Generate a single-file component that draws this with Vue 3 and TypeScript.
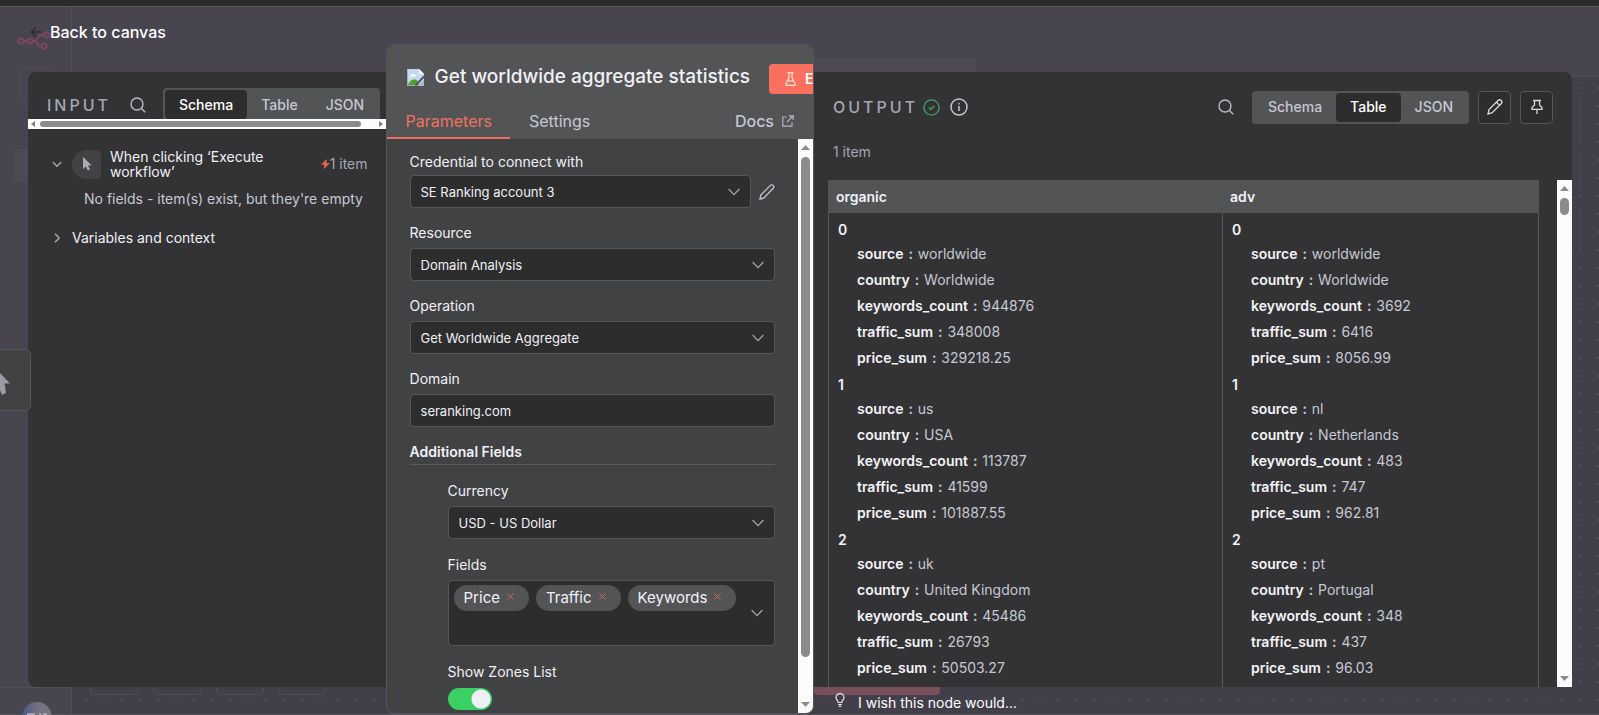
<script setup lang="ts">
import { ref } from 'vue'

interface Row {
  source: string
  country: string
  keywords_count: string
  traffic_sum: string
  price_sum: string
}

const row = (source: string, country: string, keywords: string, traffic: string, price: string): Row => ({
  source,
  country,
  keywords_count: keywords,
  traffic_sum: traffic,
  price_sum: price,
})

const columns: { name: string; rows: Row[] }[] = [
  {
    name: 'organic',
    rows: [
      row('worldwide', 'Worldwide', '944876', '348008', '329218.25'),
      row('us', 'USA', '113787', '41599', '101887.55'),
      row('uk', 'United Kingdom', '45486', '26793', '50503.27'),
    ],
  },
  {
    name: 'adv',
    rows: [
      row('worldwide', 'Worldwide', '3692', '6416', '8056.99'),
      row('nl', 'Netherlands', '483', '747', '962.81'),
      row('pt', 'Portugal', '348', '437', '96.03'),
    ],
  },
]

const views = ['Schema', 'Table', 'JSON']
const inputView = ref('Schema')
const outputView = ref('Table')
const domain = ref('seranking.com')
const tags = ref(['Price', 'Traffic', 'Keywords'])
const showZones = ref(true)

function removeTag(tag: string) {
  tags.value = tags.value.filter((t) => t !== tag)
}
</script>

<template>
  <div class="app">
    <div class="canvas" aria-hidden="true">
      <div class="topbar"></div>
      <div class="header-band"></div>
      <div class="dots"></div>
      <div class="sidebar">
        <div class="sidebar-foot"></div>
      </div>
      <svg class="brand" width="36" height="20" viewBox="0 0 36 20" fill="none" stroke="#7d4560" stroke-width="2">
        <circle cx="4" cy="10" r="2.6" /><circle cx="13" cy="10" r="2.6" />
        <circle cx="30" cy="4" r="2.6" /><circle cx="27" cy="15" r="2.6" />
        <path d="M6.6 10h4M15.6 10h3c2 0 1-6 5-6h4M18.6 10c2 0 1 5 5 5" />
      </svg>
      <svg class="avatar" width="30" height="30" viewBox="0 0 30 30">
        <defs>
          <linearGradient id="av"><stop offset="0" stop-color="#46598a" /><stop offset=".55" stop-color="#77727f" /></linearGradient>
        </defs>
        <circle cx="15" cy="15" r="15" fill="url(#av)" />
        <path d="M5 12h8M17 12h2M21 12h4" stroke="#a5a4b0" stroke-width="2" />
      </svg>
      <svg class="bottom-boxes" width="250" height="30" viewBox="0 0 250 30" fill="none" stroke="#514e59">
        <rect x=".5" y="-9.5" width="48" height="32" rx="4" /><rect x="63.5" y="-9.5" width="48" height="32" rx="4" />
        <rect x="126.5" y="-9.5" width="47" height="32" rx="4" /><rect x="188.5" y="-9.5" width="46" height="32" rx="4" />
      </svg>
      <svg class="right-boxes" width="48" height="160" viewBox="0 0 48 160" fill="none" stroke="#4b4852">
        <rect x="1" y=".5" width="46" height="45" rx="4" /><rect x="1" y="56.5" width="46" height="45" rx="4" />
        <rect x="1" y="111.5" width="46" height="45" rx="4" />
      </svg>
      <div class="ghost-tab"></div>
      <div class="ghost-button"></div>
      <div class="side-item a"></div>
      <div class="side-item b"></div>
    </div>

    <div class="ndv">
      <a class="back" href="#">
        <svg width="12" height="12" viewBox="0 0 12 12" fill="none" stroke="#2b2b30" stroke-width="1.3"><path d="M11 6H1.5M6 1.2 1.2 6 6 10.8" /></svg>
        <span>Back to canvas</span>
      </a>

      <div class="panels">
        <section class="panel input">
          <div class="input-head">
            <h2>INPUT</h2>
            <button class="icon-btn" aria-label="Search input">
              <svg width="16" height="16" viewBox="0 0 16 16" fill="none" stroke="#b8bac6" stroke-width="1.4"><circle cx="7" cy="7" r="6" /><path d="m11.4 11.4 3.8 3.8" /></svg>
            </button>
            <div class="radio">
              <button v-for="v in views" :key="v" :class="{ active: v === inputView }" @click="inputView = v">{{ v }}</button>
            </div>
          </div>
          <div class="hbar" aria-hidden="true">
            <svg width="4" height="6" viewBox="0 0 4 6"><path d="M4 0v6L0 3z" fill="#7e7e7e" /></svg>
            <div class="hthumb"></div>
            <svg width="4" height="6" viewBox="0 0 4 6"><path d="M0 0v6l4-3z" fill="#7e7e7e" /></svg>
          </div>
          <div class="schema">
            <div class="node">
              <svg class="chev" width="10" height="10" viewBox="0 0 10 10" fill="none" stroke="#a6a8b2" stroke-width="1.4"><path d="m.8 3 4.2 4.2L9.2 3" /></svg>
              <span class="node-icon">
                <svg width="10" height="14" viewBox="0 0 10 14"><path d="M1 0v12l2.8-2.6 2 4.2 2.2-1-2-4.2h3.8z" fill="#aaacb4" /></svg>
              </span>
              <span class="node-name">When clicking ‘Execute workflow’</span>
              <span class="count">
                <svg width="9" height="10" viewBox="0 0 9 10"><path d="M5.5 0 0 5.8h3L3 10l6-6H5.6z" fill="#e8604f" /></svg>1 item
              </span>
            </div>
            <p class="empty">No fields - item(s) exist, but they're empty</p>
            <div class="vars">
              <svg class="chev" width="10" height="10" viewBox="0 0 10 10" fill="none" stroke="#a6a8b2" stroke-width="1.4"><path d="m3 .8 4.2 4.2L3 9.2" /></svg>
              <span>Variables and context</span>
            </div>
          </div>
        </section>

        <section class="main">
          <header class="main-head">
            <div class="title-row">
              <svg width="17" height="17" viewBox="0 0 17 17">
                <path d="M0 0h12l5 5v12H0z" fill="#c6d7f4" /><path d="M12 0v5h5z" fill="#fff" />
                <path d="M3 7.5a2 2 0 0 1 2-2 2.5 2.5 0 0 1 4 2z" fill="#fff" />
                <path d="M1 16c1-4 4-6 7-5.5 2 0 3 1.5 4 5.5z" fill="#4ba72f" />
                <path d="M.5.5V16.5H16.5" stroke="#a9abae" fill="none" />
                <path d="M17 7.5 8.5 16.5" stroke="#535456" stroke-width="2" /><path d="M11 17h6v-6z" fill="#a9b4c4" />
              </svg>
              <h1>Get worldwide aggregate statistics</h1>
              <button class="execute">
                <svg width="11" height="14" viewBox="0 0 11 14" fill="none" stroke="#ffe9e4" stroke-width="1.1"><path d="M2.5.6h6M4 .6v5L.8 12a1 1 0 0 0 .9 1.4h7.6a1 1 0 0 0 .9-1.4L7 5.6v-5M2.4 9h6.2" /></svg>
                Execute step
              </button>
            </div>
            <nav class="tabs">
              <button class="tab active">Parameters</button>
              <button class="tab">Settings</button>
              <a class="docs" href="#">Docs
                <svg width="12" height="12" viewBox="0 0 12 12" fill="none" stroke="#b4b6c0" stroke-width="1.2"><path d="M4.5 2H.8v9.2H10V7.5M7 .8h4.2V5M11 1 5 7" /></svg>
              </a>
            </nav>
          </header>
          <div class="main-body">
            <form class="form" @submit.prevent>
              <div class="field credential">
                <label for="cred">Credential to connect with</label>
                <div class="line">
                  <div class="control">
                    <select id="cred"><option>SE Ranking account 3</option></select>
                    <svg class="caret" width="12" height="8" viewBox="0 0 12 8"><path d="m.6 1 5.4 5.6L11.4 1" /></svg>
                  </div>
                  <button type="button" class="icon-btn" aria-label="Edit credential">
                    <svg width="16" height="16" viewBox="0 0 16 16" fill="none" stroke="#c4c6d0" stroke-width="1.3"><path d="M1 15l.8-4L11.4 1.4a1.8 1.8 0 0 1 2.8 2.8L5 14z" /></svg>
                  </button>
                </div>
              </div>
              <div class="field">
                <label for="res">Resource</label>
                <div class="control">
                  <select id="res"><option>Domain Analysis</option></select>
                  <svg class="caret" width="12" height="8" viewBox="0 0 12 8"><path d="m.6 1 5.4 5.6L11.4 1" /></svg>
                </div>
              </div>
              <div class="field">
                <label for="op">Operation</label>
                <div class="control">
                  <select id="op"><option>Get Worldwide Aggregate</option></select>
                  <svg class="caret" width="12" height="8" viewBox="0 0 12 8"><path d="m.6 1 5.4 5.6L11.4 1" /></svg>
                </div>
              </div>
              <div class="field">
                <label for="dom">Domain</label>
                <div class="control"><input id="dom" v-model="domain" type="text" /></div>
              </div>
              <h3>Additional Fields</h3>
              <div class="nested">
                <div class="field">
                  <label for="cur">Currency</label>
                  <div class="control">
                    <select id="cur"><option>USD - US Dollar</option></select>
                    <svg class="caret" width="12" height="8" viewBox="0 0 12 8"><path d="m.6 1 5.4 5.6L11.4 1" /></svg>
                  </div>
                </div>
                <div class="field">
                  <span id="fields-label" class="label">Fields</span>
                  <div class="control multi" role="group" aria-labelledby="fields-label">
                    <span v-for="tag in tags" :key="tag" class="tag">{{ tag }}
                      <button type="button" :aria-label="'Remove ' + tag" @click="removeTag(tag)">
                        <svg width="7" height="7" viewBox="0 0 7 7" stroke="#d0685c" stroke-width="1"><path d="m.4.4 6.2 6.2M6.6.4.4 6.6" /></svg>
                      </button>
                    </span>
                    <svg class="caret" width="12" height="8" viewBox="0 0 12 8"><path d="m.6 1 5.4 5.6L11.4 1" /></svg>
                  </div>
                </div>
                <div class="field">
                  <label for="zones">Show Zones List</label>
                  <input id="zones" v-model="showZones" class="switch" type="checkbox" role="switch" />
                </div>
              </div>
            </form>
            <div class="vbar" aria-hidden="true">
              <svg width="9" height="5" viewBox="0 0 9 5"><path d="M0 5h9L4.5 0z" fill="#8b8b8b" /></svg>
              <div class="vtrack"><div class="vthumb form-thumb"></div></div>
              <svg width="9" height="5" viewBox="0 0 9 5"><path d="M0 0h9L4.5 5z" fill="#8b8b8b" /></svg>
            </div>
          </div>
        </section>

        <section class="panel output">
          <div class="output-head">
            <h2>OUTPUT</h2>
            <svg width="17" height="17" viewBox="0 0 17 17" fill="none" stroke="#3f9f63" stroke-width="1.4"><circle cx="8.5" cy="8.5" r="7.6" /><path d="m5.8 8.6 2 2 3.5-3.7" /></svg>
            <svg width="18" height="18" viewBox="0 0 18 18" fill="none" stroke="#c4c6cf" stroke-width="1.5"><circle cx="9" cy="9" r="8" /><path d="M9 8v5M9 5v1.5" /></svg>
            <span class="spacer"></span>
            <button class="icon-btn" aria-label="Search output">
              <svg width="16" height="16" viewBox="0 0 16 16" fill="none" stroke="#b8bac6" stroke-width="1.4"><circle cx="7" cy="7" r="6" /><path d="m11.4 11.4 3.8 3.8" /></svg>
            </button>
            <div class="radio">
              <button v-for="v in views" :key="v" :class="{ active: v === outputView }" @click="outputView = v">{{ v }}</button>
            </div>
            <button class="square" aria-label="Edit output">
              <svg width="16" height="16" viewBox="0 0 16 16" fill="none" stroke="#d8dae2" stroke-width="1.3"><path d="M1 15l1-4.5 9-9a1.9 1.9 0 0 1 3.2 3.2l-9 9zM9.5 3.2l3.2 3.2" /></svg>
            </button>
            <button class="square" aria-label="Pin data">
              <svg width="12" height="16" viewBox="0 0 12 16" fill="none" stroke="#d8dae2" stroke-width="1.3"><path d="M2 1.5h8M3.5 1.5v4.5L1 8.5v1.8h10V8.5L8.5 6V1.5M6 10.3V15" /></svg>
            </button>
          </div>
          <p class="items">1 item</p>
          <div class="data">
            <div class="table-wrap">
              <table>
                <colgroup><col class="c1" /><col /></colgroup>
                <thead>
                  <tr><th v-for="c in columns" :key="c.name" scope="col">{{ c.name }}</th></tr>
                </thead>
                <tbody>
                  <tr>
                    <td v-for="c in columns" :key="c.name">
                      <div v-for="(r, i) in c.rows" :key="i" class="group">
                        <div class="index">{{ i }}</div>
                        <div v-for="(val, key) in r" :key="key" class="pair"><b>{{ key }}</b> <i>:</i> {{ val }}</div>
                      </div>
                    </td>
                  </tr>
                </tbody>
              </table>
            </div>
            <div class="vbar" aria-hidden="true">
              <svg width="9" height="5" viewBox="0 0 9 5"><path d="M0 5h9L4.5 0z" fill="#8b8b8b" /></svg>
              <div class="vtrack"><div class="vthumb data-thumb"></div></div>
              <svg width="9" height="5" viewBox="0 0 9 5"><path d="M0 0h9L4.5 5z" fill="#8b8b8b" /></svg>
            </div>
          </div>
        </section>
      </div>

      <footer class="foot">
        <a class="wish" href="#">
          <svg width="10" height="14" viewBox="0 0 10 14" fill="none" stroke="#e6e6ec" stroke-width="1.2"><path d="M3.3 9.5C3.3 7.5 1 7 1 4.6a4 4 0 0 1 8 0C9 7 6.7 7.5 6.7 9.5zM3 11.5h4M3.8 13.4h2.4" /></svg>
          <span>I wish this node would...</span>
        </a>
      </footer>
    </div>

    <button class="float-node" aria-label="Previous node">
      <svg width="11" height="25" viewBox="0 0 11 25"><path d="M0 1l10 10.5H4.5L6 21l-4 2-2-5z" fill="#9a9ba3" /></svg>
    </button>
  </div>
</template>

<style>
html,
body {
  background: #423f4a;
}
</style>

<style scoped>
* {
  box-sizing: border-box;
}
.app {
  position: relative;
  height: 100vh;
  overflow: hidden;
  background: #423f4a;
  color: #f0f0f6;
  font: 400 14px/20px Inter, 'Liberation Sans', sans-serif;
}
h1, h2, h3, p {
  margin: 0;
}
button, input, select {
  font: inherit;
  color: inherit;
  margin: 0;
}
button {
  padding: 0;
  border: 0;
  background: none;
}
a {
  color: inherit;
  text-decoration: none;
}
svg {
  display: block;
  flex: none;
}

/* dimmed workflow canvas */
.canvas,
.canvas > * {
  position: absolute;
}
.canvas {
  inset: 0;
  border-bottom: 1px solid #55545a;
}
.topbar {
  inset: 0 0 auto;
  height: 7px;
  background: #2c2c2d;
  border-bottom: 1px solid #58585a;
}
.header-band {
  inset: 7px 0 auto;
  height: 70px;
  background: #484550;
  border-bottom: 1px solid #524f59;
}
.dots {
  inset: 77px 0 0 72px;
  background: radial-gradient(circle at 1px 1px, #524f5b 1px, transparent 1px) 13px 10px / 18px 18px;
}
.sidebar {
  inset: 7px auto 0 0;
  width: 72px;
  background: #484550;
  border-right: 1px solid #514e58;
  display: flex;
  align-items: flex-end;
}
.sidebar-foot {
  width: 100%;
  height: 27px;
  border-top: 1px solid #514e58;
}
.brand {
  left: 17px;
  top: 31px;
}
.avatar {
  left: 22px;
  bottom: -18px;
}
.bottom-boxes {
  left: 90px;
  bottom: 12px;
}
.right-boxes {
  right: 18px;
  top: 96px;
}
.ghost-tab {
  left: 814px;
  top: 58px;
  width: 162px;
  height: 14px;
  background: #4d4a55;
}
.ghost-button {
  left: 814px;
  bottom: 19px;
  width: 126px;
  height: 40px;
  border-radius: 4px;
  background: #795059;
}
.side-item {
  border-radius: 4px;
  background: #4d4a54;
}
.side-item.a {
  left: 19px;
  top: 67px;
  width: 33px;
  height: 33px;
  border: 1px solid #4f4c56;
  background: none;
}
.side-item.b {
  left: 14px;
  top: 149px;
  width: 40px;
  height: 33px;
}

/* node details */
.ndv {
  position: relative;
  display: flex;
  flex-direction: column;
  height: 100%;
}
.back {
  display: flex;
  align-items: center;
  gap: 8px;
  height: 72px;
  padding: 0 0 8px 30px;
  font-size: 16px;
  font-weight: 500;
  color: #fff;
}
.panels {
  flex: 1;
  min-height: 0;
  display: flex;
  padding: 0 27px 0 28px;
}
.panel {
  min-width: 0;
  display: flex;
  flex-direction: column;
  overflow: hidden;
  background: #333335;
}
.input {
  flex: 358 1 0;
  border-radius: 8px 0 0 8px;
}
.main {
  flex: 427 1 0;
  min-width: 0;
  margin: -28px 0 -27px;
  display: flex;
  flex-direction: column;
  overflow: hidden;
  border: 1px solid #555658;
  border-radius: 8px;
  background: #414244;
}
.output {
  flex: 759 1 0;
  border-radius: 0 8px 0 0;
}
h2 {
  font-size: 16px;
  font-weight: 500;
  letter-spacing: 3px;
  color: #a4a7b3;
}
.radio {
  display: flex;
  flex: none;
  height: 33px;
  padding: 2px;
  border-radius: 4px;
  background: #535456;
}
.radio button {
  padding: 0 14px;
  border-radius: 4px;
  font-weight: 500;
  color: #c6c8d4;
}
.radio .active {
  background: #2d2d2e;
  color: #fff;
}
.input-head {
  display: flex;
  align-items: flex-start;
  height: 47px;
  padding: 16px 0 0 19px;
  overflow: hidden;
}
.input-head h2 {
  width: 83px;
  line-height: 34px;
}
.input-head .icon-btn {
  width: 33px;
  height: 34px;
}
.hbar {
  display: flex;
  align-items: center;
  justify-content: space-between;
  gap: 5px;
  height: 10px;
  padding: 0 3px;
  background: #fcfcfc;
}
.hthumb {
  flex: 1;
  height: 6px;
  margin-right: 13px;
  border-radius: 3px;
  background: #8b8b8b;
}
.schema {
  padding: 20px 18px 0 24px;
}
.node,
.vars {
  display: flex;
  align-items: center;
}
.node {
  height: 30px;
}
.chev {
  margin-right: 10px;
}
.node-icon {
  display: flex;
  align-items: center;
  justify-content: center;
  width: 29px;
  height: 29px;
  margin-right: 9px;
  border-radius: 15px 4px 4px 15px;
  background: #414244;
}
.node-name {
  flex: 1;
  max-width: 180px;
  line-height: 15px;
}
.count {
  display: flex;
  align-items: center;
  margin-left: auto;
  color: #a4a7b3;
}
.empty {
  margin: 10px -18px 19px 32px;
  color: #c6c8d4;
}

/* parameters */
.main-head {
  flex: none;
  background: #535456;
}
.title-row {
  display: flex;
  align-items: center;
  height: 64px;
  padding-left: 20px;
  overflow: hidden;
}
h1 {
  flex: none;
  margin-left: 11px;
  font-size: 19px;
  font-weight: 500;
  white-space: nowrap;
}
.execute {
  display: flex;
  flex: none;
  align-items: center;
  gap: 9px;
  height: 30px;
  margin: 4px 0 0 19px;
  padding: 0 16px;
  border-radius: 4px;
  background: #fa6f5e;
  color: #fff;
  font-weight: 600;
}
.tabs {
  display: flex;
  align-items: stretch;
  height: 30px;
  padding-right: 19px;
  font-size: 16px;
  color: #c6c8d4;
}
.tab {
  padding: 0 18px 6px 19px;
}
.tab.active {
  color: #f3705f;
  border-bottom: 2px solid #e8705f;
  padding-bottom: 4px;
}
.docs {
  display: flex;
  align-items: center;
  gap: 8px;
  margin-left: auto;
  padding-bottom: 6px;
  font-weight: 500;
}
.main-body {
  flex: 1;
  min-height: 0;
  display: flex;
}
.form {
  flex: 1;
  min-width: 0;
  padding: 13px 23px 0;
  overflow: hidden;
}
.field {
  margin-bottom: 15px;
}
label,
.label {
  display: block;
  height: 20px;
  margin-bottom: 5px;
}
.credential label {
  margin-bottom: 3px;
}
.line {
  display: flex;
  gap: 8px;
}
.control {
  position: relative;
  flex: 1;
}
select,
input[type='text'] {
  display: block;
  width: 100%;
  height: 33px;
  padding: 0 10px;
  appearance: none;
  border: 1px solid #555658;
  border-radius: 4px;
  background: #2d2d2e;
  font-size: 13px;
}
.caret {
  position: absolute;
  right: 11px;
  top: calc(50% - 4px);
  fill: none;
  stroke: #a6a8b2;
  stroke-width: 1.2;
}
h3 {
  height: 23px;
  margin: 0 0 16px;
  border-bottom: 1px solid #5a5b5e;
  font-size: 14px;
  font-weight: 600;
}
.nested {
  padding-left: 38px;
}
.nested .field {
  margin-bottom: 16px;
}
.multi {
  display: flex;
  align-items: flex-start;
  gap: 7px;
  height: 66px;
  padding: 4px 5px;
  border: 1px solid #555658;
  border-radius: 4px;
  background: #2d2d2e;
}
.tag {
  display: flex;
  gap: 7px;
  height: 26px;
  padding: 0 15px 0 10px;
  border-radius: 13px;
  background: #535456;
  font-size: 15px;
  line-height: 26px;
}
.tag button {
  align-self: flex-start;
  padding-top: 8px;
}
.switch {
  display: block;
  width: 44px;
  height: 22px;
  margin-top: 6px;
  appearance: none;
  border-radius: 11px;
  background: radial-gradient(circle at 33px 11px, #eff0f6 9px, transparent 10px) #3ad063;
}
.vbar {
  flex: none;
  display: flex;
  flex-direction: column;
  align-items: center;
  gap: 7px;
  width: 15px;
  padding: 6px 0;
  background: #fcfcfc;
}
.vtrack {
  flex: 1;
}
.vthumb {
  width: 9px;
  border-radius: 5px;
  background: #8b8b8b;
}
.form-thumb {
  height: 93%;
}
.data-thumb {
  height: 17px;
}

/* output */
.output-head {
  display: flex;
  align-items: center;
  height: 70px;
  padding: 0 19px;
}
.output-head h2 {
  margin-right: 5px;
}
.output-head > svg {
  margin-right: 10px;
}
.spacer {
  flex: 1;
}
.output-head .radio {
  margin: 0 9px 0 18px;
}
.square {
  display: flex;
  align-items: center;
  justify-content: center;
  width: 33px;
  height: 33px;
  border: 1px solid #555658;
  border-radius: 4px;
  background: #2d2d2e;
}
.square + .square {
  margin-left: 9px;
}
.items {
  padding: 0 19px;
  margin-bottom: 18px;
  color: #a4a7b3;
}
.data {
  flex: 1;
  min-height: 0;
  display: flex;
}
.table-wrap {
  flex: 1;
  min-width: 0;
  padding: 0 18px 0 14px;
  overflow: hidden;
}
table {
  width: 100%;
  border-collapse: separate;
  border-spacing: 0;
  table-layout: fixed;
}
.c1 {
  width: 394px;
}
th {
  height: 33px;
  padding: 0 8px;
  background: #535456;
  text-align: left;
  font-weight: 600;
}
td {
  padding: 6px 9px;
  border-left: 1px solid #58595b;
  vertical-align: top;
  color: #c6c8d4;
}
td:last-child {
  border-right: 1px solid #58595b;
}
.group {
  margin-bottom: 3px;
}
.index {
  line-height: 22px;
  font-weight: 600;
  color: #f4f4f8;
}
.pair {
  padding-left: 19px;
  line-height: 26px;
}
.pair b {
  font-weight: 600;
  color: #f4f4f8;
}
.pair i {
  margin: 0 1px;
  font-style: normal;
  font-weight: 600;
}
.foot {
  flex: none;
  display: flex;
  height: 28px;
  padding: 6px 27px 0 28px;
}
.foot::before {
  content: '';
  flex: 807 1 0;
}
.wish {
  flex: 737 1 0;
  display: flex;
  gap: 13px;
  color: #fff;
}

.float-node {
  position: absolute;
  left: 0;
  top: 349px;
  width: 31px;
  height: 62px;
  padding-top: 8px;
  border: 1px solid #555658;
  border-left: 0;
  border-radius: 0 6px 6px 0;
  background: #414244;
}
</style>
